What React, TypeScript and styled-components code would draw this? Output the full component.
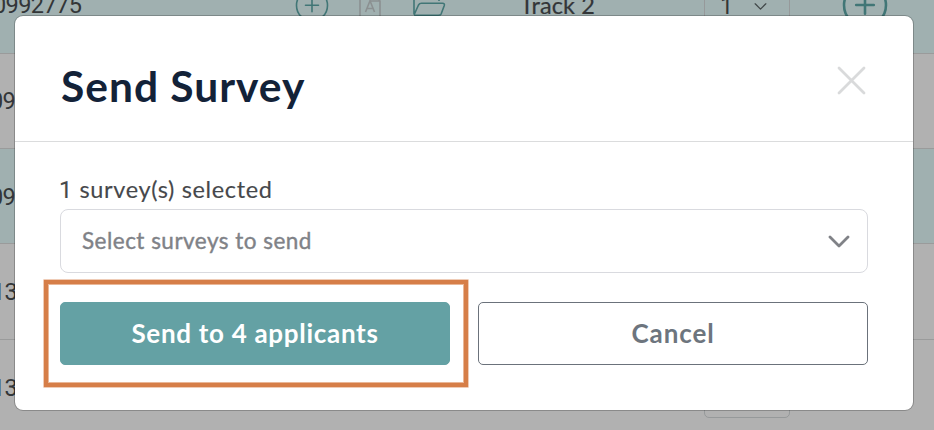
import React from 'react';
import styled, { createGlobalStyle } from 'styled-components';

const GlobalStyle = createGlobalStyle`
  *, *::before, *::after { box-sizing: border-box; }
  body { margin: 0; overflow: hidden; }
  button { font: inherit; margin: 0; padding: 0; }
`;

const Page = styled.main`
  position: relative;
  width: 934px;
  height: 430px;
  overflow: hidden;
  background: #b1b1b1;
  font-family: Lato, 'Liberation Sans', sans-serif;
`;

const Table = styled.div`
  margin-top: -41px;
`;

const Row = styled.div<{ $selected?: boolean; $height?: number }>`
  display: grid;
  grid-template-columns: 295px 52px 46px 72px 187px 190px 1fr;
  align-items: center;
  height: ${(p) => p.$height ?? 95}px;
  border-bottom: 1px solid #9a9b9b;
  background: ${(p) => (p.$selected ? '#a0b0b0' : '#b1b1b1')};
  color: #333638;
`;

const Cell = styled.div<{ $center?: boolean }>`
  display: flex;
  align-items: center;
  justify-content: ${(p) => (p.$center ? 'center' : 'flex-start')};
  white-space: nowrap;
  font-size: 23.5px;
  line-height: 30px;
`;

const Digits = styled.span`
  font-family: Roboto, Lato, sans-serif;
`;

const IdNumber = styled(Digits)<{ $shift: number; $drop?: number }>`
  margin-top: ${(p) => p.$drop ?? 0}px;
  margin-left: ${(p) => p.$shift}px;
  letter-spacing: -0.6px;
`;

const Track = styled.span`
  margin: -2px 2px 0 0;
  letter-spacing: 0.1px;
  -webkit-text-stroke: 0.2px currentColor;
`;

const CountSelect = styled.div`
  display: flex;
  align-items: center;
  justify-content: space-between;
  width: 86px;
  height: 62px;
  margin-left: 52px;
  padding: 0 22px 0 15px;
  border: 1px solid #96999a;
  border-radius: 5px;
`;

const Overlay = styled.div`
  position: absolute;
  inset: 0;
  padding: 15px 0 0 14px;
`;

const Dialog = styled.section`
  width: 900px;
  height: 396px;
  border: 1px solid rgba(0, 0, 0, 0.22);
  border-radius: 9px;
  background: #fff;
  background-clip: padding-box;
`;

const DialogHeader = styled.header`
  display: flex;
  justify-content: space-between;
  height: 126px;
  padding: 45px 46px 0 46px;
  border-bottom: 1px solid #dbdcdd;
`;

const Title = styled.h1`
  margin: 0;
  color: #132238;
  font-size: 42.5px;
  font-weight: 700;
  line-height: 50px;
  letter-spacing: 1px;
`;

const CloseButton = styled.button`
  width: 32px;
  height: 32px;
  margin-top: 4px;
  border: 0;
  background: none;
`;

const DialogBody = styled.div`
  padding: 32px 45px 0;
`;

const Summary = styled.p`
  height: 30px;
  margin: 0 0 0 -1px;
  color: #46484b;
  font-size: 23.5px;
  line-height: 30px;
  letter-spacing: 0.65px;
  -webkit-text-stroke: 0.15px currentColor;
`;

const SurveySelect = styled.div`
  display: flex;
  align-items: center;
  justify-content: space-between;
  height: 64px;
  margin-top: 5px;
  padding: 0 17px 0 21px;
  border: 1px solid #d9dadf;
  border-radius: 8px;
  color: #808287;
  font-size: 22.5px;
`;

const Placeholder = styled.span`
  margin-top: -2px;
  letter-spacing: 0.48px;
  -webkit-text-stroke: 0.4px currentColor;
`;

const Actions = styled.div`
  display: grid;
  grid-template-columns: 390px 390px;
  gap: 28px;
  margin-top: 29px;
`;

const ActionSlot = styled.div`
  position: relative;
  display: grid;
`;

const ActionButton = styled.button<{ $primary?: boolean }>`
  height: 63px;
  padding-bottom: 2px;
  border: 1px solid ${(p) => (p.$primary ? '#64a1a4' : '#6b727b')};
  border-radius: 5px;
  background: ${(p) => (p.$primary ? '#64a1a4' : '#fff')};
  color: ${(p) => (p.$primary ? '#fff' : '#6d757e')};
  font-size: 26px;
  font-weight: 700;
  letter-spacing: ${(p) => (p.$primary ? 0.7 : 0.9)}px;
`;

const Highlight = styled.div`
  position: absolute;
  inset: -22px -18px -22px -16px;
  border: 4px solid #d67e48;
  box-shadow: 0 0 0 0.6px #e5aa87, inset 0 0 0 1px #e9b798;
  pointer-events: none;
`;

const AddIcon = ({ size, weight }: { size: number; weight: number }) => (
  <svg width={size} height={size} viewBox="0 0 34 34" fill="none" stroke="#417676" strokeWidth={weight} strokeLinecap="round">
    <circle cx="17" cy="16.4" r="15.5" />
    <path d="M10.5 16.2h13M17 9.7v13" />
  </svg>
);

const DocumentIcon = () => (
  <svg width="22" height="36" viewBox="0 0 22 36" fill="none" stroke="#8b9091" strokeWidth="1.6">
    <path d="M1 1h10l10 12v22H1zM11 1v12h10M6.5 24l4-10h1l4 10M8 20.5h6" />
  </svg>
);

const FolderIcon = () => (
  <svg width="34" height="32" viewBox="0 0 34 32" fill="none" stroke="#417676" strokeWidth="1.6" strokeLinejoin="round">
    <path d="M2 24V3q0-2 2-2h8l3 4h10q2 0 2 3v3M2 25l4.500-10q1-1.700 3-1.700h21q2.500 0 1.700 2.500l-3 8q-.7 1.500-3 1.500H2" />
  </svg>
);

const Chevron = ({ width, weight, color }: { width: number; weight: number; color: string }) => (
  <svg width={width} height={width * 0.6} viewBox="0 0 22 13" fill="none" stroke={color} strokeWidth={weight} strokeLinecap="round" strokeLinejoin="round">
    <path d="M2 3l9 9 9-9" />
  </svg>
);

export default function App() {
  return (
    <>
      <GlobalStyle />
      <Page>
        <Table>
          <Row $selected>
            <Cell><IdNumber $shift={-7} $drop={-2}>0992775</IdNumber></Cell>
            <Cell><AddIcon size={34} weight={1.6} /></Cell>
            <Cell $center><DocumentIcon /></Cell>
            <Cell $center><FolderIcon /></Cell>
            <Cell $center><Track>Track 2</Track></Cell>
            <Cell>
              <CountSelect>
                <Digits>1</Digits>
                <Chevron width={13} weight={2.2} color="#414849" />
              </CountSelect>
            </Cell>
            <Cell><AddIcon size={46} weight={1.9} /></Cell>
          </Row>
          <Row><Cell><IdNumber $shift={-10}>09</IdNumber></Cell></Row>
          <Row $selected><Cell><IdNumber $shift={-10} $drop={2}>09</IdNumber></Cell></Row>
          <Row $height={96}><Cell><IdNumber $shift={-8}>13</IdNumber></Cell></Row>
          <Row>
            <Cell><IdNumber $shift={-8} $drop={2}>13</IdNumber></Cell>
            <Cell /><Cell /><Cell /><Cell />
            <Cell><CountSelect /></Cell>
          </Row>
        </Table>
        <Overlay>
          <Dialog role="dialog" aria-label="Send Survey">
            <DialogHeader>
              <Title>Send Survey</Title>
              <CloseButton aria-label="Close">
                <svg width="32" height="32" viewBox="0 0 32 32" stroke="#d9dadb" strokeWidth="2.8" strokeLinecap="round">
                  <path d="M4 3l25 25M29 3L4 28" />
                </svg>
              </CloseButton>
            </DialogHeader>
            <DialogBody>
              <Summary><Digits>1</Digits> survey(s) selected</Summary>
              <SurveySelect>
                <Placeholder>Select surveys to send</Placeholder>
                <Chevron width={22} weight={2.8} color="#808287" />
              </SurveySelect>
              <Actions>
                <ActionSlot>
                  <ActionButton $primary>Send to 4 applicants</ActionButton>
                  <Highlight />
                </ActionSlot>
                <ActionSlot>
                  <ActionButton>Cancel</ActionButton>
                </ActionSlot>
              </Actions>
            </DialogBody>
          </Dialog>
        </Overlay>
      </Page>
    </>
  );
}
